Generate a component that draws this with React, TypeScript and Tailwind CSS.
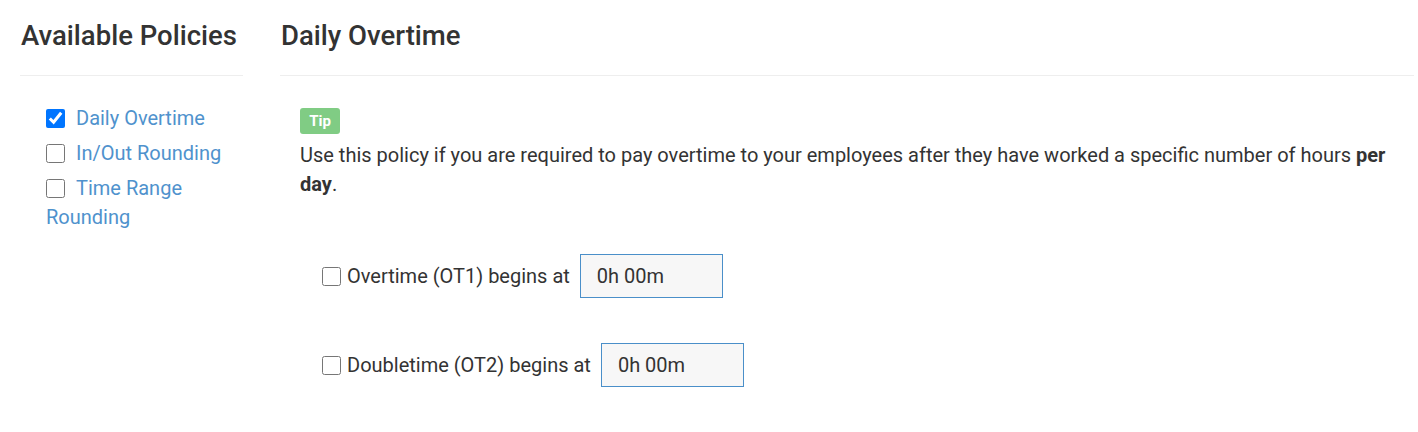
import React from 'react';

const policies = [
  { name: 'Daily Overtime', checked: true },
  { name: 'In/Out Rounding', checked: false },
  { name: 'Time Range Rounding', checked: false },
];

const thresholds = ['Overtime (OT1) begins at', 'Doubletime (OT2) begins at'];

const App: React.FC = () => {
  return (
    <div className="min-h-screen bg-white font-['Roboto',sans-serif] text-[#333333]">
      <div className="flex pl-[20px]">
        {/* Sidebar */}
        <div className="w-[223px] shrink-0">
          <h2 className="mt-[21px] pb-[24px] border-b border-[#eeeeee] pl-px text-[27.5px] leading-[30px] font-medium">
            Available Policies
          </h2>
          <ul className="pt-[28px] pl-[26px] pr-[4px]">
            {policies.map((p) => (
              <li key={p.name} className="mb-[6px] text-[20px] leading-[29px]">
                <label className="text-[#4f92cd] cursor-pointer">
                  <input
                    type="checkbox"
                    defaultChecked={p.checked}
                    className="w-[19px] h-[19px] mr-[11px] align-middle relative top-[-1px]"
                  />
                  {p.name}
                </label>
              </li>
            ))}
          </ul>
        </div>

        {/* Policy detail */}
        <div className="flex-1 ml-[37px] mr-[4px]">
          <h2 className="mt-[21px] pb-[24px] border-b border-[#eeeeee] pl-px text-[27.5px] leading-[30px] font-medium">
            Daily Overtime
          </h2>
          <div className="px-[20px]">
            <div className="flex mt-[32px]">
              <span className="h-[26px] w-[40px] rounded-[3px] bg-[#80cc84] text-white text-[15px] font-bold flex items-center justify-center">
                Tip
              </span>
            </div>
            <p className="mt-[7px] text-[20px] leading-[29px]">
              Use this policy if you are required to pay overtime to your employees after they have worked a specific number of hours <b>per</b> <b>day</b>.
            </p>

            <div className="mt-[55px] pl-[22px] flex flex-col gap-[45px]">
              {thresholds.map((t) => (
                <div key={t} className="flex items-center text-[20px]">
                  <input type="checkbox" className="w-[19px] h-[19px] mr-[6px]" />
                  <span>{t}</span>
                  <input
                    type="text"
                    readOnly
                    defaultValue="0h 00m"
                    className="ml-[10px] w-[143px] h-[44px] border border-[#4a8fc9] bg-[#f7f7f7] px-[16px] text-[20px] text-[#333333] outline-none"
                  />
                </div>
              ))}
            </div>
          </div>
        </div>
      </div>
    </div>
  );
};

export default App;
